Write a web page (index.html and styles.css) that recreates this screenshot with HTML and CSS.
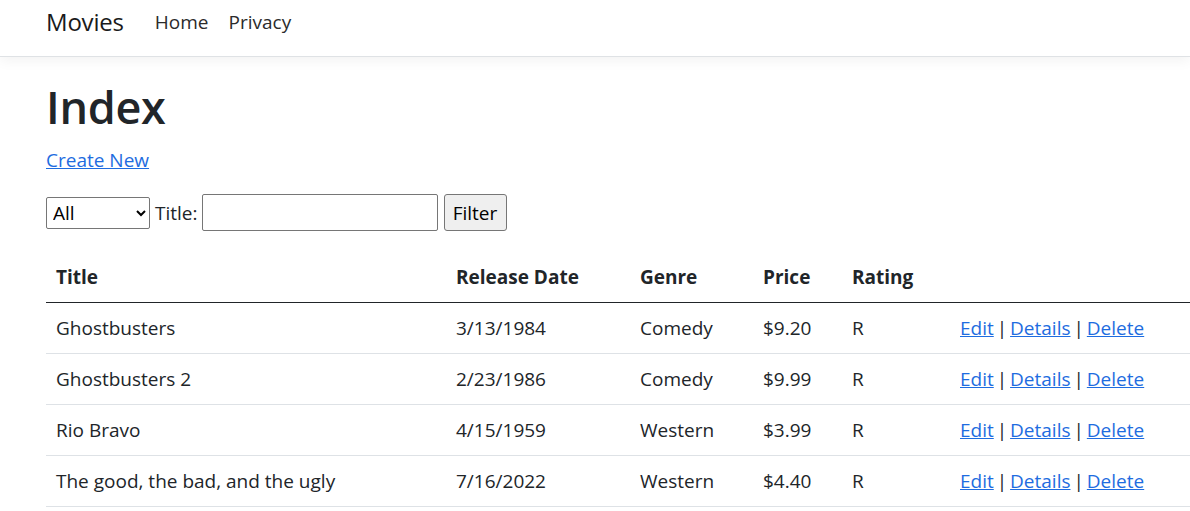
FILE: index.html
```html
<!DOCTYPE html>
<html lang="en">
<head>
<meta charset="utf-8">
<title>Index - Movies</title>
<link rel="stylesheet" href="styles.css">
</head>
<body>
<header class="navbar">
  <a class="brand" href="#">Movies</a>
  <nav class="nav-links">
    <a class="nav-link" href="#">Home</a>
    <a class="nav-link" href="#">Privacy</a>
  </nav>
</header>
<main class="container">
  <h1 class="title">Index</h1>
  <p class="create"><a href="#">Create New</a></p>
  <form class="filter">
    <select class="genre">
      <option>All</option>
      <option>Comedy</option>
      <option>Western</option>
    </select>
    <label class="title-label">Title: <input class="title-input" type="text"></label>
    <button class="filter-btn" type="button">Filter</button>
  </form>
  <table class="table">
    <colgroup>
      <col class="c-title"><col class="c-date"><col class="c-genre"><col class="c-price"><col class="c-rating"><col>
    </colgroup>
    <thead>
      <tr><th>Title</th><th>Release Date</th><th>Genre</th><th>Price</th><th>Rating</th><th></th></tr>
    </thead>
    <tbody>
      <tr><td>Ghostbusters</td><td>3/13/1984</td><td>Comedy</td><td>$9.20</td><td>R</td><td class="actions"><a href="#">Edit</a> | <a href="#">Details</a> | <a href="#">Delete</a></td></tr>
      <tr><td>Ghostbusters 2</td><td>2/23/1986</td><td>Comedy</td><td>$9.99</td><td>R</td><td class="actions"><a href="#">Edit</a> | <a href="#">Details</a> | <a href="#">Delete</a></td></tr>
      <tr><td>Rio Bravo</td><td>4/15/1959</td><td>Western</td><td>$3.99</td><td>R</td><td class="actions"><a href="#">Edit</a> | <a href="#">Details</a> | <a href="#">Delete</a></td></tr>
      <tr><td>The good, the bad, and the ugly</td><td>7/16/2022</td><td>Western</td><td>$4.40</td><td>R</td><td class="actions"><a href="#">Edit</a> | <a href="#">Details</a> | <a href="#">Delete</a></td></tr>
    </tbody>
  </table>
</main>
</body>
</html>
```
FILE: styles.css
```css
* { box-sizing: border-box; }
html, body { margin: 0; padding: 0; }
body {
  font-family: "Open Sans", "Noto Sans", "Liberation Sans", sans-serif;
  font-size: 19px;
  line-height: 28px;
  color: #212529;
  background: #fff;
  overflow: hidden;
}
a { color: #1e6ce0; }

.navbar {
  height: 57px;
  display: flex;
  align-items: center;
  padding: 0 0 13px 46px;
  border-bottom: 1px solid #dfe2e5;
  box-shadow: 0 4px 12px rgba(0,0,0,.05);
}
.brand {
  font-size: 24px;
  line-height: 32px;
  color: #1a1a1a;
  text-decoration: none;
  margin-right: 21px;
  letter-spacing: -0.2px;
}
.nav-links { display: flex; }
.nav-link {
  color: #2b2b2b;
  text-decoration: none;
  padding: 0 10px;
  font-size: 19px;
}

.container { padding: 0 0 0 46px; }
.title {
  font-size: 45px;
  font-weight: 600;
  line-height: 54px;
  margin: 23px 0 0;
  letter-spacing: -0.3px;
}
.create { margin: 12px 0 0; }
.create a { text-decoration: underline; }

.filter {
  display: flex;
  align-items: center;
  margin: 20px 0 0;
  height: 37px;
}
.genre {
  width: 104px;
  height: 32px;
  font: inherit;
  font-size: 19px;
  border: 1px solid #767676;
  border-radius: 2px;
  background: #fff;
  color: #000;
  padding: 0 2px;
}
.title-label { margin-left: 5px; display: flex; align-items: center; }
.title-input {
  width: 236px;
  height: 37px;
  margin-left: 4px;
  border: 1px solid #767676;
  border-radius: 2px;
  font: inherit;
}
.filter-btn {
  margin-left: 6px;
  height: 37px;
  width: 63px;
  font: inherit;
  color: #000;
  background: #efefef;
  border: 1px solid #767676;
  border-radius: 3px;
  padding: 0;
}

.table {
  width: 100%;
  border-collapse: collapse;
  margin-top: 21px;
}
.c-title { width: 400px; }
.c-date { width: 184px; }
.c-genre { width: 123px; }
.c-price { width: 89px; }
.c-rating { width: 108px; }
.table th, .table td {
  text-align: left;
  padding: 11px 10px;
  line-height: 28px;
  vertical-align: top;
}
.table th {
  font-weight: 700;
  border-bottom: 1.5px solid #212529;
}
.table td { border-bottom: 1px solid #dee2e6; }
.table td.actions { word-spacing: -2px; }
```
